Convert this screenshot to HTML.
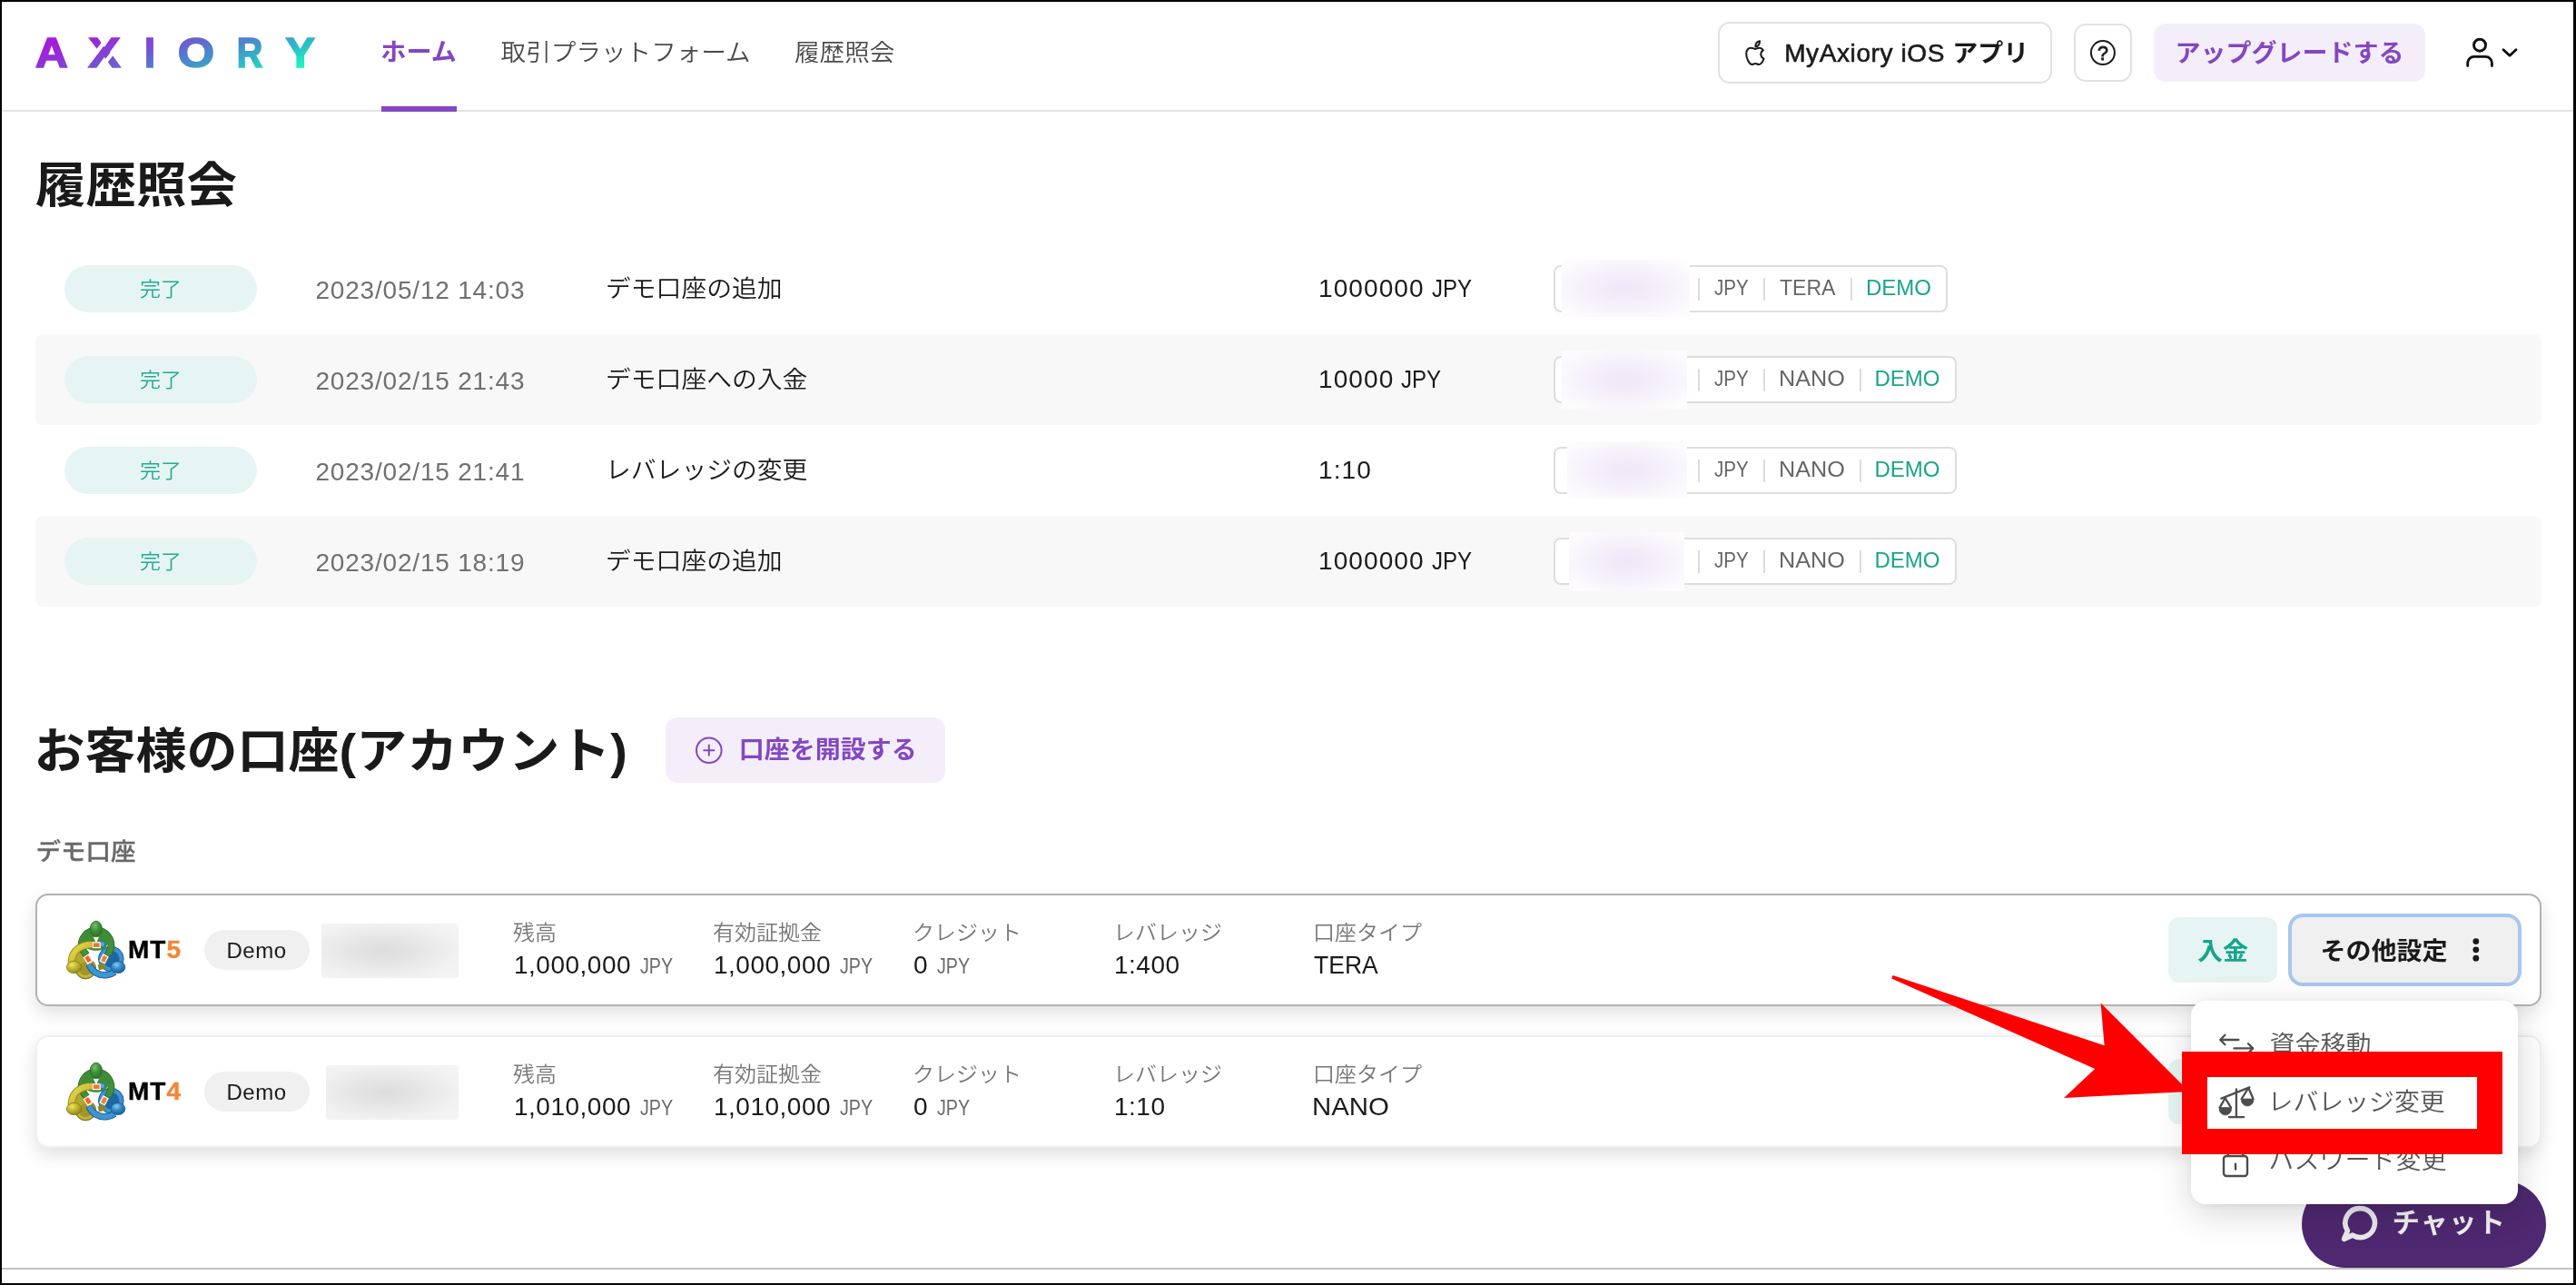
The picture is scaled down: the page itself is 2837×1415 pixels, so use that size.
<!DOCTYPE html>
<html lang="ja">
<head>
<meta charset="utf-8">
<title>MyAxiory</title>
<style>
html,body{margin:0;padding:0}
body{width:2837px;height:1415px;position:relative;overflow:hidden;background:#fff;
  font-family:"Liberation Sans","Noto Sans CJK JP",sans-serif;color:#1a1a1a;-webkit-font-smoothing:antialiased}
#pg{position:absolute;left:0;top:0;width:2837px;height:1415px;overflow:hidden;will-change:transform;transform:translateZ(0);font-weight:350}
.a{position:absolute;white-space:nowrap}
.jp{font-family:"Liberation Sans","Noto Sans CJK JP",sans-serif}
.b{font-weight:700}
.sy{transform:scaleY(.96)}
span.sy{display:inline-block}
svg{position:absolute;overflow:visible}
/* frame */
.fr{position:absolute;background:#000;z-index:50}
/* header */
.nav{font-size:27.6px;line-height:40px;top:37.5px;color:#4b4b4b}
.hbtn{box-sizing:border-box;border:2px solid #e2e2e2;border-radius:13px;background:#fff}
/* table */
.row{left:39px;width:2760px;height:100px;border-radius:8px}
.row.g{background:#f8f8f8}
.badge{left:32px;top:24px;width:212px;height:52px;border-radius:26px;background:#e6f5f4;color:#25aa90;
  font-size:23px;line-height:52px;text-align:center}
.date{left:308.5px;top:32px;font-size:28px;line-height:40px;color:#707070;letter-spacing:.8px}
.desc{left:628px;top:29.7px;font-size:27.8px;line-height:40px;color:#1a1a1a}
.amt{left:1413px;top:30px;font-size:28px;line-height:40px;color:#1a1a1a;letter-spacing:1.1px}
.amt b{font-weight:inherit;display:inline-block;letter-spacing:0;transform:scaleX(.857);transform-origin:0 50%;margin-left:-1px}
.tag{left:1672px;top:24px;height:51.6px;box-sizing:border-box;border:2px solid #dedede;border-radius:8px;background:#fff}
.tag span{position:absolute;top:5px;font-size:24px;line-height:36px;color:#666;white-space:nowrap;transform-origin:0 50%}
.tag .j{transform:scaleX(.855)}
.tag .t{transform:scaleX(.96)}
.tag .n{transform:scaleX(1.05)}
.tag i{position:absolute;top:12px;width:2px;height:25px;background:#dcdcdc}
.tag .dm{color:#1aa58a}
.blur{position:absolute;background:radial-gradient(ellipse at 50% 50%,#eee8f8 0%,#f3eefa 35%,#fbf9fd 75%,#fefdfe 100%)}
/* accounts */
.card{left:39px;width:2759.5px;box-sizing:border-box;border-radius:14px;background:#fff}
.lbl{font-size:24px;line-height:32px;color:#777}
.val{font-size:28px;line-height:36px;color:#1a1a1a;letter-spacing:.5px}
.val small{display:inline-block;font-size:23.5px;color:#6b6b6b;letter-spacing:0;transform:scaleX(.84);transform-origin:0 50%;margin-left:1.2px}
.val u{text-decoration:none;display:inline-block;letter-spacing:0;transform:scaleX(.947);transform-origin:0 50%}
.pill{width:116px;height:44px;border-radius:22px;background:#f0f0f0;font-size:24px;line-height:45px;text-align:center;color:#1a1a1a;letter-spacing:.5px;text-indent:-1px}
.mt{font-size:28px;line-height:40px;font-weight:700;color:#000;letter-spacing:1px;margin:1px 0 0 -1px;-webkit-text-stroke:.4px #000}
.mt em{-webkit-text-stroke:.4px #f58634}
.mt em{font-style:normal;color:#f58634}
.gblur{position:absolute;background:radial-gradient(ellipse at 45% 50%,#dcdcdc 0%,#e6e6e6 35%,#f1f1f1 70%,#f5f5f5 100%);border-radius:3px}
.dep{width:120px;height:72px;border-radius:12px;background:#e6f5f4;color:#17a589;font-weight:700;font-size:28px;line-height:76px;text-align:center}
.mi{font-size:28px;line-height:40px;color:#555;left:86.5px}
</style>
</head>
<body>
<div id="pg">

<!-- ===== header ===== -->
<div class="a" style="left:0;top:121px;width:2837px;height:2px;background:#e4e4e4"></div>
<svg id="logo" style="left:30px;top:30px" width="330" height="60" viewBox="30 30 330 60">
  <defs>
    <linearGradient id="lg" gradientUnits="userSpaceOnUse" x1="60.5" y1="51.5" x2="93.8" y2="151.5">
      <stop offset="0" stop-color="#a41dda"/>
      <stop offset=".33" stop-color="#7453d2"/>
      <stop offset=".58" stop-color="#4a88cc"/>
      <stop offset=".8" stop-color="#2bbec7"/>
      <stop offset="1" stop-color="#1df3c0"/>
    </linearGradient>
  </defs>
  <g fill="url(#lg)" stroke="url(#lg)" stroke-width="1.6" font-family="Liberation Sans, sans-serif" font-weight="700" font-size="45.6">
    <text x="39.1" y="74.3" textLength="35.8" lengthAdjust="spacingAndGlyphs">A</text>
    <text x="97.3" y="74.3" textLength="35.4" lengthAdjust="spacingAndGlyphs">X</text>
    <path d="M120.6 39 L91.1 77 M139 39 L109.4 77" stroke="#fff" stroke-width="4.4" fill="none"/>
    <text x="158.9" y="74.3" textLength="12" lengthAdjust="spacingAndGlyphs">I</text>
    <text x="195.8" y="74.3" textLength="40.4" lengthAdjust="spacingAndGlyphs">O</text>
    <text x="260.8" y="74.3" textLength="28.6" lengthAdjust="spacingAndGlyphs">R</text>
    <text x="314.6" y="74.3" textLength="32.4" lengthAdjust="spacingAndGlyphs">Y</text>
  </g>
</svg>

<div class="a nav b sy" style="left:419.3px;top:38.3px;font-size:28.1px;color:#8347c2">ホーム</div>
<div class="a" style="left:420px;top:117px;width:83px;height:6px;background:#8347c2"></div>
<div class="a nav sy" style="left:551.6px">取引プラットフォーム</div>
<div class="a nav sy" style="left:875px">履歴照会</div>

<div class="a hbtn" style="left:1892px;top:24px;width:368px;height:68px"></div>
<div class="a" style="left:1965.2px;top:39px;font-size:28px;line-height:40px;color:#1a1a1a;letter-spacing:.6px;-webkit-text-stroke:.6px #1a1a1a">MyAxiory iOS <span class="sy" style="font-weight:700;-webkit-text-stroke:0;letter-spacing:0">アプリ</span></div>
<div class="a hbtn" style="left:2284px;top:26px;width:64px;height:64px"></div>
<div class="a" style="left:2372px;top:26px;width:299px;height:64px;border-radius:13px;background:#f4eefb"></div>
<div class="a b sy" style="left:2395.5px;top:39px;font-size:28px;line-height:40px;color:#8347c2">アップグレードする</div>



<!-- ===== history ===== -->
<div class="a b sy" style="left:39px;top:162.5px;font-size:55.5px;line-height:84px;color:#1a1a1a">履歴照会</div>
<div class="a row" style="top:268px">
  <div class="a badge"><span class="sy">完了</span></div>
  <div class="a date">2023/05/12 14:03</div>
  <div class="a desc sy">デモ口座の追加</div>
  <div class="a amt">1000000 <b>JPY</b></div>
  <div class="a tag" style="width:434px"><i style="left:157px"></i><i style="left:228.5px"></i><i style="left:324.5px"></i><span class="j" style="left:174.5px">JPY</span><span class="t" style="left:246.5px">TERA</span><span class="dm" style="left:342px">DEMO</span></div>
  <div class="blur" style="left:1681px;top:18px;width:141px;height:63px"></div>
</div>
<div class="a row g" style="top:368px">
  <div class="a badge"><span class="sy">完了</span></div>
  <div class="a date">2023/02/15 21:43</div>
  <div class="a desc sy">デモ口座への入金</div>
  <div class="a amt">10000 <b>JPY</b></div>
  <div class="a tag" style="width:443.5px"><i style="left:157px"></i><i style="left:228.5px"></i><i style="left:334.5px"></i><span class="j" style="left:174.5px">JPY</span><span class="n" style="left:245.5px">NANO</span><span class="dm" style="left:351.5px">DEMO</span></div>
  <div class="blur" style="left:1681px;top:18px;width:138px;height:64px"></div>
</div>
<div class="a row" style="top:468px">
  <div class="a badge"><span class="sy">完了</span></div>
  <div class="a date">2023/02/15 21:41</div>
  <div class="a desc sy">レバレッジの変更</div>
  <div class="a amt">1:10</div>
  <div class="a tag" style="width:443.5px"><i style="left:157px"></i><i style="left:228.5px"></i><i style="left:334.5px"></i><span class="j" style="left:174.5px">JPY</span><span class="n" style="left:245.5px">NANO</span><span class="dm" style="left:351.5px">DEMO</span></div>
  <div class="blur" style="left:1687px;top:18px;width:132px;height:63px"></div>
</div>
<div class="a row g" style="top:568px">
  <div class="a badge"><span class="sy">完了</span></div>
  <div class="a date">2023/02/15 18:19</div>
  <div class="a desc sy">デモ口座の追加</div>
  <div class="a amt">1000000 <b>JPY</b></div>
  <div class="a tag" style="width:443.5px"><i style="left:157px"></i><i style="left:228.5px"></i><i style="left:334.5px"></i><span class="j" style="left:174.5px">JPY</span><span class="n" style="left:245.5px">NANO</span><span class="dm" style="left:351.5px">DEMO</span></div>
  <div class="blur" style="left:1689px;top:18px;width:127px;height:65px"></div>
</div>



<svg width="0" height="0" style="left:0;top:0">
  <defs>
    <radialGradient id="gG" cx=".4" cy=".3" r=".8"><stop offset="0" stop-color="#7cc06c"/><stop offset=".45" stop-color="#3f8f38"/><stop offset="1" stop-color="#2a6b27"/></radialGradient>
    <radialGradient id="gY" cx=".35" cy=".3" r=".8"><stop offset="0" stop-color="#f0e45c"/><stop offset=".5" stop-color="#bdb02c"/><stop offset="1" stop-color="#857b1c"/></radialGradient>
    <radialGradient id="gB" cx=".4" cy=".3" r=".8"><stop offset="0" stop-color="#8ccaf0"/><stop offset=".45" stop-color="#2f86c4"/><stop offset="1" stop-color="#155a92"/></radialGradient>
    <linearGradient id="gYa" x1="0" y1="0" x2="1" y2="1"><stop offset="0" stop-color="#e8dc48"/><stop offset="1" stop-color="#b0a326"/></linearGradient>
    <g id="mtic">
      <!-- yellow body -->
      <circle cx="22.3" cy="53.6" r="11.3" fill="#a1962a" stroke="#7f761b" stroke-width="1"/>
      <circle cx="22.3" cy="53.6" r="8.8" fill="none" stroke="#c4b83c" stroke-width="2.6"/>
      <path d="M9.5 48 C9.5 40 14 34.5 20.5 33 L25.5 41.5 L20 47 Z" fill="#b3a72e"/>
      <!-- blue body -->
      <circle cx="50.3" cy="43" r="13.8" fill="#1e67a3" stroke="#155a92" stroke-width="1"/>
      <circle cx="50.3" cy="43" r="11.2" fill="none" stroke="#3f93d0" stroke-width="4"/>
      <!-- green arms -->
      <path d="M23.2 38.8 L18 31.5 A16.4 16.4 0 1 1 50 31.5 L47 38.6" fill="none" stroke="#2a6b27" stroke-width="7.8" stroke-linejoin="round"/>
      <path d="M23.2 38.8 L18 31.5 A16.4 16.4 0 1 1 50 31.5 L47 38.6" fill="none" stroke="#43913b" stroke-width="6" stroke-linejoin="round"/>
      <!-- torso -->
      <path d="M18 22 C20 12 27 9 34 9 C41 9 48 12 50 22 L43.5 31.5 C39 34.6 29 34.6 24.5 31.5 Z" fill="#3f8c38"/>
      <path d="M30.8 18.8 L37 18.8 L34 25.5 Z" fill="#fff"/>
      <!-- green head -->
      <ellipse cx="33.8" cy="9.8" rx="6.6" ry="8.6" fill="url(#gG)" stroke="#2a6b27" stroke-width=".8"/>
      <!-- yellow arm (over green left arm) -->
      <path d="M29.4 27.2 C17.5 26.8 7.6 33.5 6.8 45.5 L7 50" fill="none" stroke="#8d8420" stroke-width="8.2"/>
      <path d="M29.4 27.2 C17.5 26.8 7.6 33.5 6.8 45.5 L7 50" fill="none" stroke="url(#gYa)" stroke-width="6.4"/>
      <!-- blue lower arm -->
      <path d="M26.2 49 C29.5 57.5 37 61.5 45 60.6 C49 60.2 52 59 54 57.5" fill="none" stroke="#155a92" stroke-width="7.6"/>
      <path d="M26.2 49 C29.5 57.5 37 61.5 45 60.6 C49 60.2 52 59 54 57.5" fill="none" stroke="#3f95d2" stroke-width="5.8"/>
      <!-- olive patch -->
      <path d="M35.6 49.4 L43.4 47.6 L44 53.6 L37 55.6 Z" fill="#8f8420"/>
      <!-- heads -->
      <ellipse cx="9.6" cy="52" rx="8.2" ry="6.7" fill="url(#gY)" stroke="#857b1c" stroke-width=".8"/>
      <ellipse cx="57.9" cy="52" rx="7.9" ry="6.6" fill="url(#gB)" stroke="#155a92" stroke-width=".8"/>
      <!-- blue hand top -->
      <path d="M38.8 23.6 L43.6 24.4 L42.8 30 L38.4 29.2 Z" fill="#55a8e2" stroke="#1f6eaa" stroke-width=".8"/>
      <!-- docs -->
      <rect x="30.2" y="24.8" width="8" height="5.8" fill="#f4722a" stroke="#fff" stroke-width="1.2"/>
      <rect x="-4" y="-2.9" width="8" height="5.8" transform="translate(25 43.2) rotate(58)" fill="#f4622a" stroke="#fff" stroke-width="1.2"/>
      <rect x="-4" y="-2.9" width="8" height="5.8" transform="translate(42.6 42.8) rotate(-62)" fill="#f4822a" stroke="#fff" stroke-width="1.2"/>
    </g>
  </defs>
</svg>

<!-- ===== accounts ===== -->
<div class="a b sy" style="left:37.5px;top:785.5px;font-size:56px;line-height:84px;color:#1a1a1a">お客様の口座(アカウント)</div>
<div class="a" style="left:733px;top:790px;width:308px;height:72px;border-radius:13px;background:#f4eefb"></div>
<svg style="left:764px;top:810px" width="34" height="34" viewBox="0 0 34 34" fill="none" stroke="#8347c2" stroke-width="2" stroke-linecap="round">
  <circle cx="16.8" cy="16.2" r="13.8"/><path d="M16.8 10.6 v11.2 M11.2 16.2 h11.2"/>
</svg>
<div class="a b sy" style="left:813.8px;top:806.4px;font-size:28px;line-height:40px;color:#8347c2">口座を開設する</div>
<div class="a sy" style="left:39.5px;top:917.5px;font-size:27.5px;line-height:40px;color:#6a6a6a;font-weight:500;-webkit-text-stroke:.35px #6a6a6a">デモ口座</div>
<div class="a card" style="top:984px;height:124px;border:2px solid #b2b2b2;box-shadow:0 8px 20px rgba(0,0,0,.12)">
  <svg class="mticon" style="left:31px;top:27px" width="68" height="66" viewBox="0 0 68 66"><use href="#mtic"/></svg>
  <div class="a mt" style="left:101px;top:39px">MT<em>5</em></div>
  <div class="a pill" style="left:184px;top:38px">Demo</div>
  <div class="gblur" style="left:313px;top:31px;width:151px;height:60px"></div>
  <div class="a lbl sy" style="left:524px;top:25px">残高</div><div class="a val" style="left:525px;top:59px">1,000,000 <small>JPY</small></div>
  <div class="a lbl sy" style="left:744px;top:25px">有効証拠金</div><div class="a val" style="left:745px;top:59px">1,000,000 <small>JPY</small></div>
  <div class="a lbl sy" style="left:964px;top:25px">クレジット</div><div class="a val" style="left:965px;top:59px">0 <small>JPY</small></div>
  <div class="a lbl sy" style="left:1185px;top:25px">レバレッジ</div><div class="a val" style="left:1186px;top:59px">1:400</div>
  <div class="a lbl sy" style="left:1405px;top:25px">口座タイプ</div><div class="a val" style="left:1406px;top:59px"><u>TERA</u></div>
</div>
<div class="a card" style="top:1140px;height:124px;border:2px solid #f0f0f0;box-shadow:0 8px 20px rgba(0,0,0,.12)">
  <svg class="mticon" style="left:31px;top:27.3px" width="68" height="66" viewBox="0 0 68 66"><use href="#mtic"/></svg>
  <div class="a mt" style="left:101px;top:39.3px">MT<em>4</em></div>
  <div class="a pill" style="left:184px;top:38.3px">Demo</div>
  <div class="gblur" style="left:318px;top:31.3px;width:146px;height:60px"></div>
  <div class="a lbl sy" style="left:524px;top:25.3px">残高</div><div class="a val" style="left:525px;top:59.3px">1,010,000 <small>JPY</small></div>
  <div class="a lbl sy" style="left:744px;top:25.3px">有効証拠金</div><div class="a val" style="left:745px;top:59.3px">1,010,000 <small>JPY</small></div>
  <div class="a lbl sy" style="left:964px;top:25.3px">クレジット</div><div class="a val" style="left:965px;top:59.3px">0 <small>JPY</small></div>
  <div class="a lbl sy" style="left:1185px;top:25.3px">レバレッジ</div><div class="a val" style="left:1186px;top:59.3px">1:10</div>
  <div class="a lbl sy" style="left:1405px;top:25.3px">口座タイプ</div><div class="a val" style="left:1406px;top:59.3px"><u style="transform:scaleX(1.05);margin-left:-2.5px">NANO</u></div>
</div>


<!-- ===== right controls ===== -->
<div class="a dep" style="left:2388px;top:1010px"><span class="sy">入金</span></div>
<div class="a dep" style="left:2388px;top:1166px"><span class="sy">入金</span></div>
<div class="a" style="left:2520px;top:1006px;width:257px;height:80px;border-radius:16px;background:#a9c6ee"></div>
<div class="a" style="left:2524px;top:1010px;width:249px;height:72px;border-radius:12px;background:#f0f0f0"></div>
<div class="a b sy" style="left:2555.5px;top:1028px;font-size:28px;line-height:40px;color:#1a1a1a">その他設定</div>
<svg style="left:2720px;top:1029.8px" width="14" height="32" viewBox="0 0 14 32" fill="#1a1a1a"><circle cx="6.8" cy="6.6" r="3.4"/><circle cx="6.8" cy="15.8" r="3.4"/><circle cx="6.8" cy="25.2" r="3.4"/></svg>

<!-- chat -->
<div class="a" style="left:2535px;top:1300px;width:269px;height:96px;border-radius:48px;background:#4e2870"></div>
<svg style="left:2576px;top:1324px" width="46" height="48" viewBox="0 0 46 48" fill="none" stroke="#ebe8ee" stroke-width="5.6" stroke-linejoin="round" stroke-linecap="round">
  <path d="M23.5 6.6 a16 16 0 1 1 -8.6 29.5 L5.6 40.4 L9.4 31.2 A16 16 0 0 1 23.5 6.6 Z"/>
</svg>
<div class="a b" style="left:2634.5px;top:1324.3px;font-size:30.5px;line-height:44px;color:#f2f0f3;letter-spacing:.9px">チャット</div>

<!-- dropdown -->
<div class="a" style="left:2413px;top:1102px;width:360px;height:224px;border-radius:16px;background:#fff;box-shadow:0 10px 40px rgba(0,0,0,.16),0 2px 10px rgba(0,0,0,.06)">
  <svg style="left:30px;top:36px" width="42" height="22" viewBox="0 0 42 22" fill="none" stroke="#4d4d4d" stroke-width="2.3" stroke-linecap="round" stroke-linejoin="round">
    <path d="M22.4 7 H2.2 M7.4 1.8 L2.2 7 L7.4 12.2"/><path d="M17.4 16.4 H38.2 M33 11.2 L38.2 16.4 L33 21.6"/>
  </svg>
  <div class="a mi sy" style="top:29px">資金移動</div>
  <svg style="left:29px;top:92px" width="42" height="40" viewBox="0 0 42 40" fill="none" stroke="#4d4d4d" stroke-width="2.3" stroke-linecap="round" stroke-linejoin="round">
    <path d="M4.4 15.6 L35.4 3.4"/><path d="M20.9 5.4 V36.1 M12.9 36.1 H29.2"/>
    <path d="M8.6 15.2 L2.6 25.6 M8.6 15.2 L15 25.6"/><path d="M34.3 3.9 L26.7 16 M34.3 3.9 L39.5 16"/>
    <path d="M2.2 25.5 H15.4 A6.8 6.8 0 1 1 2.2 25.5 Z" fill="#4d4d4d" stroke-width=".6"/><path d="M26.3 16 H39.9 A6.9 6.9 0 1 1 26.3 16 Z" fill="#4d4d4d" stroke-width=".6"/>
  </svg>
  <div class="a mi sy" style="top:91.5px;left:84.5px;font-size:27.9px">レバレッジ変更</div>
  <svg style="left:33px;top:150px" width="32" height="46" viewBox="0 0 32 46" fill="none" stroke="#4d4d4d" stroke-width="2.4" stroke-linecap="round" stroke-linejoin="round">
    <path d="M7.8 21 V14 a8.2 8.2 0 0 1 16.4 0 V21"/><rect x="3" y="21" width="26" height="22" rx="3"/><path d="M16 29.6 V35.6"/>
  </svg>
  <div class="a mi sy" style="top:156.2px;left:85.5px">パスワード変更</div>
</div>

<!-- annotation -->
<svg style="left:0;top:0" width="2837" height="1415" viewBox="0 0 2837 1415">
  <polygon points="2084.6,1074 2317.6,1151.2 2313.6,1104.4 2411,1202 2273,1209 2307.2,1177 2083.2,1077.6" fill="#fe0000"/>
</svg>
<div class="a" style="left:2402.5px;top:1158.3px;width:353px;height:112.8px;box-sizing:border-box;border:28px solid #fe0000"></div>

<!-- bottom line -->
<div class="a" style="left:0;top:1396px;width:2837px;height:2px;background:#c2c2c2"></div>

<!-- header icons -->
<svg style="left:1922px;top:44px" width="23" height="29" viewBox="0 0 23 29" fill="none" stroke="#1a1a1a" stroke-width="2" stroke-linejoin="round">
  <path d="M11.2 10 C9.6 10 8.6 8.7 6.4 8.7 C3.3 8.7 1.2 11.4 1.2 15 C1.2 19.8 4.3 27 7.4 27 C8.9 27 9.7 26 11.3 26 C12.9 26 13.5 27 15.1 27 C17.4 27 19.5 23.5 20.6 20.6 C18.5 19.7 17.3 17.9 17.3 15.8 C17.3 13.8 18.4 12.2 20 11.2 C18.9 9.6 17.2 8.7 15.4 8.7 C13.5 8.7 12.5 10 11.2 10 Z"/>
  <path d="M11.4 7.4 C11.4 4.2 13.3 1.6 16 1.2 C16 4.4 14.1 7 11.4 7.4 Z"/>
</svg>
<svg style="left:2300px;top:42px" width="32" height="32" viewBox="0 0 32 32">
  <circle cx="15.9" cy="16.1" r="13" fill="none" stroke="#1a1a1a" stroke-width="2"/>
  <text x="16" y="23.6" text-anchor="middle" font-family="Liberation Sans, sans-serif" font-weight="400" font-size="21.5" fill="#1a1a1a" stroke="#1a1a1a" stroke-width=".8">?</text>
</svg>
<svg style="left:2710px;top:36px" width="70" height="44" viewBox="2710 36 70 44" fill="none" stroke="#111" stroke-width="2.9" stroke-linecap="round" stroke-linejoin="round">
  <circle cx="2731" cy="49.7" r="6.5"/>
  <path d="M2717.7 72.6 v-3.2 a7 7 0 0 1 7 -7 h12.7 a7 7 0 0 1 7 7 v3.2"/>
  <path d="M2757 54.7 L2764 61.2 L2771 54.7"/>
</svg>

<!-- ===== frame (screenshot border) ===== -->
<div class="fr" style="left:0;top:0;width:2837px;height:2px"></div>
<div class="fr" style="left:0;top:0;width:2px;height:1415px"></div>
<div class="fr" style="left:0;top:1413px;width:2837px;height:2px"></div>
<div class="fr" style="left:2834px;top:0;width:3px;height:1415px"></div>
</div>
</body>
</html>
